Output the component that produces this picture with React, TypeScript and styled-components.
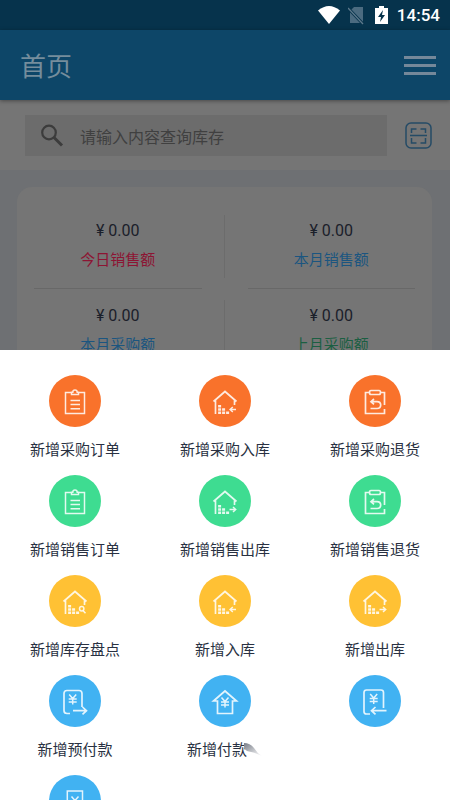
import React from "react";
import styled, { createGlobalStyle } from "styled-components";

const GlobalStyle = createGlobalStyle`
  * { box-sizing: border-box; }
  body {
    margin: 0;
    background: #6e7073;
    font-family: Roboto, "Noto Sans CJK SC", sans-serif;
    overflow: hidden;
  }
  button { border: 0; padding: 0; background: none; font: inherit; cursor: pointer; }
`;

const Screen = styled.div`
  min-height: 100vh;
`;

const StatusBar = styled.div`
  display: flex;
  align-items: center;
  justify-content: flex-end;
  height: 30px;
  padding: 0 10px;
  background: #06334c;
  color: #fff;
`;

const StatusIcon = styled.svg<{ $gap: number }>`
  height: 20px;
  margin-right: ${(p) => p.$gap}px;
`;

const Clock = styled.time`
  font-size: 17px;
  font-weight: 500;
  line-height: 32px;
`;

const Header = styled.header`
  position: relative;
  display: flex;
  align-items: center;
  justify-content: space-between;
  height: 70px;
  padding: 0 14px 0 20px;
  background: #0d4668;
  box-shadow: 0 1px 4px rgba(0, 0, 0, 0.4);
`;

const Title = styled.h1`
  margin: 0;
  color: #758d9c;
  font-family: "Noto Sans CJK SC", sans-serif;
  font-size: 26px;
  font-weight: 400;
  line-height: 36px;
`;

const MenuButton = styled.button`
  display: grid;
  gap: 5px;
  width: 32px;
`;

const MenuBar = styled.span`
  height: 3px;
  background: #74889a;
`;

const SearchBar = styled.div`
  display: flex;
  align-items: center;
  gap: 18px;
  height: 70px;
  padding: 0 18px 0 25px;
  background: #757575;
`;

const SearchField = styled.label`
  display: flex;
  flex: 1;
  align-items: center;
  gap: 16px;
  height: 41px;
  padding-left: 15px;
  background: #6c6c6c;
`;

const SearchInput = styled.input`
  flex: 1;
  min-width: 0;
  height: 28px;
  padding: 2px 0 0;
  border: 0;
  outline: 0;
  background: none;
  color: #333;
  font: 400 16px/26px "Noto Sans CJK SC", sans-serif;
  &::placeholder { color: #404040; opacity: 1; }
`;

const ScanButton = styled.button`
  display: flex;
`;

const Card = styled.section`
  margin: 17px 18px 0 17px;
  padding: 17px;
  border-radius: 15px;
  background: #757575;
`;

const StatRow = styled.div`
  display: grid;
  grid-template-columns: 1fr 46px 1fr;
`;

const Stat = styled.div`
  display: flex;
  flex-direction: column;
  align-items: center;
  height: 85px;
  padding-top: 14px;
  border-bottom: 1px solid #686868;
`;

const StatValue = styled.span`
  color: #1b202a;
  font-size: 16px;
  line-height: 26px;
`;

const StatLabel = styled.span<{ $color: string }>`
  margin-top: 4px;
  color: ${(p) => p.$color};
  font-size: 15px;
  line-height: 24px;
`;

const Divider = styled.div`
  width: 1px;
  margin: 11px auto;
  background: #6c6c6c;
`;

const Sheet = styled.nav`
  position: fixed;
  right: 0;
  bottom: 0;
  left: 0;
  display: grid;
  grid-template-columns: repeat(3, 1fr);
  grid-auto-rows: 100px;
  max-height: 450px;
  padding-top: 25px;
  overflow: hidden;
  background: #fff;
`;

const Action = styled.button`
  display: flex;
  flex-direction: column;
  align-items: center;
  color: #293142;
  font-family: "Noto Sans CJK SC", sans-serif;
  font-size: 15px;
`;

const Disc = styled.svg<{ $color: string }>`
  width: 52px;
  height: 52px;
  border-radius: 50%;
  background: ${(p) => p.$color};
  fill: none;
  stroke: #fff;
  stroke-opacity: 0.85;
  stroke-width: 1.5;
`;

const ActionLabel = styled.span<{ $wide?: boolean }>`
  display: flex;
  min-width: ${(p) => (p.$wide ? 75 : 0)}px;
  margin-top: 10px;
  line-height: 24px;
  text-align: left;
`;

const Smudge = styled.svg`
  width: 20px;
  height: 24px;
  margin-left: -4px;
`;

type Glyph =
  | "order" | "return" | "in" | "out" | "check"
  | "prepay" | "pay" | "receive" | "bill";

const Yen = ({ x, y }: { x: number; y: number }) => (
  <path d={`M${x - 3.5} ${y - 4.5}l3.5 4 3.5-4M${x} ${y - 0.5}v6M${x - 4} ${y}h8M${x - 4} ${y + 3}h8`} />
);

const House = () => (
  <>
    <path d="M14.5 26.5 26 16.5l11.5 10M16.5 25v14M35.5 25v5" strokeWidth="1.7" />
    <g strokeWidth="3" strokeDasharray="2.5 0.8">
      <path d="M20.6 39v-9.1M24.6 39v-5.8M28.6 39v-2.5" />
    </g>
  </>
);

const drawings: Record<Glyph, React.ReactNode> = {
  order: (
    <path d="M22.5 17.5h-6v21h19v-21h-6M22.5 19.5v-2.2h1.3a2.2 2.2 0 0 1 4.4 0h1.3v2.2zM21.5 25.5h9.5M21.5 29.5h9.5M21.5 33.7h9.5" />
  ),
  return: (
    <path d="M20.5 17.5h-4v21h19V34M31.5 17.5h4V30M22 15.5h8q1.5 0 1.5 2t-1.5 2h-8q-1.5 0-1.5-2t1.5-2M25 24l-3 2.7 3 2.6M22.5 26.7H28q3.7 0 3.7 3.4T28 33.5h-6.5" strokeWidth="1.7" />
  ),
  in: (
    <>
      <House />
      <path d="M37 34.5h-5.5M33.8 32l-2.7 2.5 2.7 2.5" />
    </>
  ),
  out: (
    <>
      <House />
      <path d="M30.5 34.5h6M34 32l2.7 2.5L34 37" />
    </>
  ),
  check: (
    <>
      <House />
      <circle cx="32.7" cy="33.8" r="2.2" />
      <path d="m34.2 35.7 2.3 2.5" />
    </>
  ),
  prepay: (
    <>
      <path d="M21 38.5h-3q-3 0-3-3v-17q0-3 3-3h12q3 0 3 3V32M24 35.7h13M33.5 32l4 3.7-4 3.6" strokeWidth="1.7" />
      <Yen x={23.7} y={24} />
    </>
  ),
  pay: (
    <>
      <path d="M14.5 26 26 16l11.5 10h-4v12.5h-15V26z" strokeWidth="1.7" />
      <Yen x={26} y={27} />
    </>
  ),
  receive: (
    <>
      <path d="M21 39h-3.5q-2.5 0-2.5-2.5v-19q0-2.5 2.5-2.5H32q2.5 0 2.5 2.5V33M37.5 35.7H22.5M26.5 32l-4 3.7 4 3.6" strokeWidth="1.7" />
      <Yen x={24.7} y={23.5} />
    </>
  ),
  bill: (
    <>
      <path d="M18.3 38V16h15.2v22z" />
      <Yen x={26} y={26} />
    </>
  ),
};

const orange = "#f9722b";
const green = "#3edc91";
const yellow = "#ffc134";
const blue = "#41b2f2";

const actions: { label: string; color: string; glyph: Glyph; cut?: boolean }[] = [
  { label: "新增采购订单", color: orange, glyph: "order" },
  { label: "新增采购入库", color: orange, glyph: "in" },
  { label: "新增采购退货", color: orange, glyph: "return" },
  { label: "新增销售订单", color: green, glyph: "order" },
  { label: "新增销售出库", color: green, glyph: "out" },
  { label: "新增销售退货", color: green, glyph: "return" },
  { label: "新增库存盘点", color: yellow, glyph: "check" },
  { label: "新增入库", color: yellow, glyph: "in" },
  { label: "新增出库", color: yellow, glyph: "out" },
  { label: "新增预付款", color: blue, glyph: "prepay" },
  { label: "新增付款", color: blue, glyph: "pay", cut: true },
  { label: "", color: blue, glyph: "receive" },
  { label: "", color: blue, glyph: "bill" },
];

const stats = [
  [
    { label: "今日销售额", color: "#8d1433" },
    { label: "本月销售额", color: "#1b5580" },
  ],
  [
    { label: "本月采购额", color: "#1b5580" },
    { label: "上月采购额", color: "#1b5f42" },
  ],
];

export default function App() {
  return (
    <Screen>
      <GlobalStyle />
      <StatusBar>
        <StatusIcon $gap={8} width="22" viewBox="0 0 22 20" fill="#fff">
          <path d="M0 5.5Q11-3.5 22 5.5L11 19z" />
        </StatusIcon>
        <StatusIcon $gap={11} width="16" viewBox="0 0 16 20">
          <path d="M6 2h9v16H2V6z" fill="#4b6b80" />
          <path d="m0 3 15 16" stroke="#06334c" strokeWidth="3" />
          <path d="m0 3 15 16" stroke="#5d798b" strokeWidth="1.3" />
        </StatusIcon>
        <StatusIcon $gap={9} width="13" viewBox="0 0 13 20">
          <path d="M4 1h5v2h4v16H0V3h4z" fill="#fff" />
          <path d="M8 5 3 12h3l-1 5 5-7H7z" fill="#06334c" />
        </StatusIcon>
        <Clock>14:54</Clock>
      </StatusBar>
      <Header>
        <Title>首页</Title>
        <MenuButton aria-label="菜单">
          <MenuBar />
          <MenuBar />
          <MenuBar />
        </MenuButton>
      </Header>
      <SearchBar>
        <SearchField>
          <svg width="24" height="24" viewBox="0 0 24 24" fill="none" stroke="#3c3c3c">
            <circle cx="9" cy="9.5" r="6.8" strokeWidth="2.2" />
            <path d="m14 14.5 8 8" strokeWidth="3" />
          </svg>
          <SearchInput aria-label="查询库存" placeholder="请输入内容查询库存" />
        </SearchField>
        <ScanButton aria-label="扫码">
          <svg width="27" height="27" viewBox="0 0 27 27" fill="none" stroke="#254b66" strokeWidth="1.5">
            <rect x="1" y="1" width="25" height="25" rx="5" />
            <path d="M5 13.5h17M6.5 11V7h5M15.5 7h5v4M6.5 16v5h5M15.5 21h5v-5" />
          </svg>
        </ScanButton>
      </SearchBar>
      <Card>
        {stats.map((row, i) => (
          <StatRow key={i}>
            <Stat>
              <StatValue>¥ 0.00</StatValue>
              <StatLabel $color={row[0].color}>{row[0].label}</StatLabel>
            </Stat>
            <Divider />
            <Stat>
              <StatValue>¥ 0.00</StatValue>
              <StatLabel $color={row[1].color}>{row[1].label}</StatLabel>
            </Stat>
          </StatRow>
        ))}
      </Card>
      <Sheet>
        {actions.map((a, i) => (
          <Action key={i}>
            <Disc $color={a.color} viewBox="0 0 52 52">
              {drawings[a.glyph]}
            </Disc>
            <ActionLabel $wide={a.cut}>
              {a.label}
              {a.cut && (
                <Smudge viewBox="0 0 20 24">
                  <defs>
                    <linearGradient id="fade" x1="0" y1="0" x2="1" y2="1">
                      <stop offset="0" stopColor="#777c87" />
                      <stop offset="1" stopColor="#fff" />
                    </linearGradient>
                  </defs>
                  <path d="M1 6q6 0 10 5 3 5 8 8-8-4-15-5-4-3-3-8z" fill="url(#fade)" />
                </Smudge>
              )}
            </ActionLabel>
          </Action>
        ))}
      </Sheet>
    </Screen>
  );
}
